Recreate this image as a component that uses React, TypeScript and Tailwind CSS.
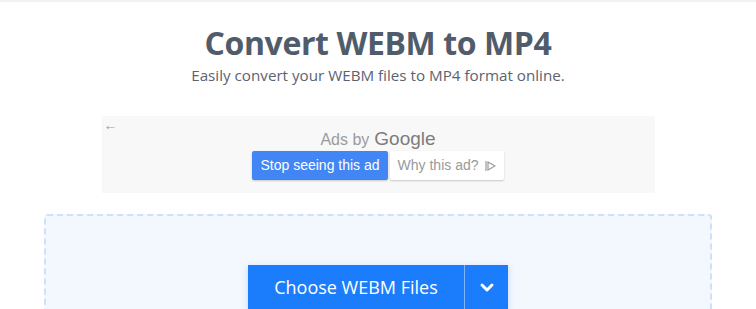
import React from 'react';

const App: React.FC = () => {
  return (
    <div className="w-[756px] h-[309px] overflow-hidden bg-white border-t-2 border-[#f2f2f2]" style={{ fontFamily: '"Open Sans", "Noto Sans", sans-serif' }}>
      {/* Header */}
      <div className="flex flex-col items-center pt-[20px]">
        <h1 className="text-[32px] leading-[42px] font-bold text-[#515c6b] tracking-[-0.4px]">Convert WEBM to MP4</h1>
        <p className="text-[15.2px] leading-[22px] text-[#5b6370]">Easily convert your WEBM files to MP4 format online.</p>
      </div>

      {/* Ad slot */}
      <div className="mx-auto mt-[30px] w-[553px] h-[77px] bg-[#f8f8f8] relative flex flex-col items-center" style={{ fontFamily: '"Liberation Sans", Arial, sans-serif' }}>
        <span className="absolute left-[2px] top-[-1px] text-[14px] text-[#9a9a9a]">←</span>
        <div className="mt-[9px] flex items-baseline gap-[5px] h-[22px]">
          <span className="text-[16px] text-[#9b9b9b]">Ads by</span>
          <span className="text-[19px] text-[#7d7d7d]">Google</span>
        </div>
        <div className="mt-[4px] flex gap-[2px]">
          <button className="h-[29px] px-[8px] bg-[#4285f4] text-white text-[14px] rounded-[2px] shadow-[0_1px_2px_rgba(0,0,0,0.2)]">Stop seeing this ad</button>
          <button className="h-[29px] px-[8px] bg-white text-[#9a9a9a] text-[14px] rounded-[2px] shadow-[0_1px_2px_rgba(0,0,0,0.2)] flex items-center gap-[6px]">
            Why this ad?
            <svg width="11" height="12" viewBox="0 0 11 12" fill="none" stroke="#9a9a9a" strokeWidth="1.2">
              <path d="M1 1v10" />
              <path d="M3 2l7 4-7 4z" />
            </svg>
          </button>
        </div>
      </div>

      {/* Drop zone */}
      <div className="ml-[44px] mt-[21px] w-[668px] h-[120px] border-2 border-dashed border-[#cfe0fb] rounded-[3px] bg-[#f3f7fe] flex justify-center pt-[49px]">
        <div className="flex h-[44px] shadow-[0_2px_6px_rgba(26,125,252,0.25)]">
          <button className="w-[216px] bg-[#1b7dfc] text-white text-[18px] flex items-center justify-center">Choose WEBM Files</button>
          <div className="w-[1px] bg-[#7fb5fd]" />
          <button className="w-[43px] bg-[#1b7dfc] flex items-center justify-center">
            <svg width="16" height="16" viewBox="0 0 16 16" fill="none" stroke="white" strokeWidth="3" strokeLinecap="round" strokeLinejoin="round">
              <path d="M3 6l5 5 5-5" />
            </svg>
          </button>
        </div>
      </div>
    </div>
  );
};

export default App;
